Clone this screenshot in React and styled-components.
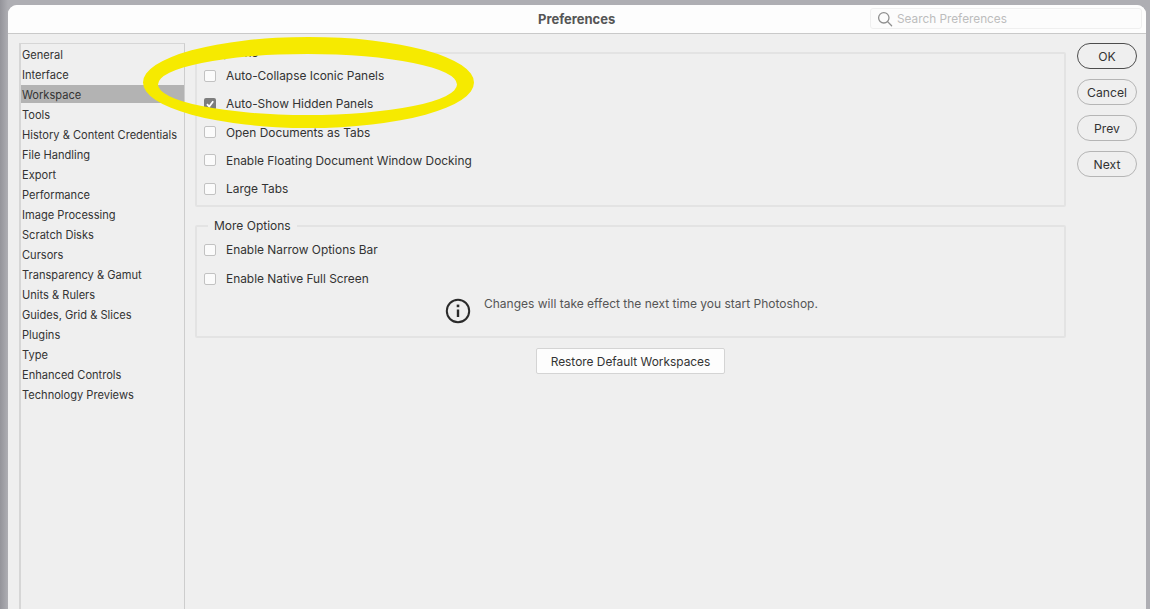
import React from "react";
import styled, { createGlobalStyle } from "styled-components";

const categories = [
  "General",
  "Interface",
  "Workspace",
  "Tools",
  "History & Content Credentials",
  "File Handling",
  "Export",
  "Performance",
  "Image Processing",
  "Scratch Disks",
  "Cursors",
  "Transparency & Gamut",
  "Units & Rulers",
  "Guides, Grid & Slices",
  "Plugins",
  "Type",
  "Enhanced Controls",
  "Technology Previews",
];

const optionRows = [
  { label: "Auto-Collapse Iconic Panels" },
  { label: "Auto-Show Hidden Panels", checked: true },
  { label: "Open Documents as Tabs" },
  { label: "Enable Floating Document Window Docking" },
  { label: "Large Tabs" },
];

const moreRows = [
  { label: "Enable Narrow Options Bar" },
  { label: "Enable Native Full Screen" },
];

const App = () => {
  return (
    <>
      <GlobalStyle />
      <StyledWindow>
        <StyledTitleBar>
          <StyledTitle>Preferences</StyledTitle>
          <StyledSearch>
            <svg width="16" height="16" viewBox="0 0 16 16" fill="none" stroke="#8f8f8f" strokeWidth="1.3">
              <circle cx="6.8" cy="6.8" r="5.2" />
              <path d="M10.6 10.6L14.6 14.8" strokeLinecap="round" />
            </svg>
            <span>Search Preferences</span>
          </StyledSearch>
        </StyledTitleBar>
        <StyledBody>
          <StyledSidebar>
            {categories.map((name) => (
              <StyledCategory key={name} $active={name === "Workspace"}>
                {name}
              </StyledCategory>
            ))}
          </StyledSidebar>
          <StyledContent>
            <StyledGroup $height="155px">
              <StyledLegend>Options</StyledLegend>
              <StyledRows $top="5px" $gap="13.25px">
                {optionRows.map((row) => (
                  <StyledRow key={row.label}>
                    <StyledCheckbox $checked={row.checked}>
                      {row.checked && (
                        <svg width="10" height="10" viewBox="0 0 10 10" fill="none" stroke="#fff" strokeWidth="1.8">
                          <path d="M2 5.2L4.2 7.6L8.2 2.2" />
                        </svg>
                      )}
                    </StyledCheckbox>
                    {row.label}
                  </StyledRow>
                ))}
              </StyledRows>
            </StyledGroup>
            <StyledGroup $height="113px">
              <StyledLegend>More Options</StyledLegend>
              <StyledRows $top="6px" $gap="14px">
                {moreRows.map((row) => (
                  <StyledRow key={row.label}>
                    <StyledCheckbox />
                    {row.label}
                  </StyledRow>
                ))}
              </StyledRows>
              <StyledNotice>
                <svg width="26" height="26" viewBox="0 0 26 26" fill="none" stroke="#2b2b2b">
                  <circle cx="13" cy="13" r="11.2" strokeWidth="2" />
                  <path d="M13 11.5V19" strokeWidth="2.4" />
                  <path d="M13 6.6V9.2" strokeWidth="2.6" />
                </svg>
                <span>Changes will take effect the next time you start Photoshop.</span>
              </StyledNotice>
            </StyledGroup>
            <StyledRestore>Restore Default Workspaces</StyledRestore>
          </StyledContent>
          <StyledActions>
            <StyledButton $primary>OK</StyledButton>
            <StyledButton>Cancel</StyledButton>
            <StyledButton>Prev</StyledButton>
            <StyledButton>Next</StyledButton>
          </StyledActions>
        </StyledBody>
      </StyledWindow>
      <StyledHighlight width="340" height="100" viewBox="0 0 340 100">
        <path
          fill="#f6ea00"
          fillRule="evenodd"
          d="M1 45.5a165.5 45.5 0 1 0 331 0a165.5 45.5 0 1 0 -331 0Z M16 47.5a149.5 30.5 0 1 0 299 0a149.5 30.5 0 1 0 -299 0Z"
        />
      </StyledHighlight>
    </>
  );
};

const GlobalStyle = createGlobalStyle`
  html, body {
    margin: 0;
    height: 609px;
    overflow: hidden;
    background: linear-gradient(90deg, #94949a 0, #aeaeb3 8px);
  }
  body {
    box-sizing: border-box;
    padding: 5px 4px 0 8px;
    font-family: Inter, "Liberation Sans", sans-serif;
    font-size: 11.9px;
    color: #333;
  }
`;

const StyledWindow = styled.div`
  height: 604px;
  display: flex;
  flex-direction: column;
  background: #efefef;
  border-radius: 9px 9px 0 0;
  overflow: hidden;
`;

const StyledTitleBar = styled.header`
  position: relative;
  height: 28px;
  flex: none;
  display: flex;
  align-items: center;
  justify-content: flex-end;
  padding-right: 4px;
  background: #fdfdfd;
  border-bottom: 1px solid #c9c9c9;
`;

const StyledTitle = styled.h1`
  position: absolute;
  left: 530px;
  margin: -1px 0 0;
  font-size: 13px;
  font-weight: 700;
  color: #555;
`;

const StyledSearch = styled.div`
  width: 272px;
  height: 21px;
  box-sizing: border-box;
  display: flex;
  align-items: center;
  gap: 4px;
  padding-left: 6px;
  margin-top: -1px;
  font-size: 11.8px;
  background: #fcfcfc;
  border: 1px solid #efefef;
  border-radius: 3px;
  color: #bdbdbd;
`;

const StyledBody = styled.div`
  flex: 1;
  min-height: 0;
  display: flex;
  padding: 9px 9px 0 11px;
`;

const StyledSidebar = styled.nav`
  width: 166px;
  flex: none;
  box-sizing: border-box;
  padding-top: 1px;
  font-size: 11.1px;
  border-left: 2px solid #d6d6d6;
  border-right: 1px solid #cdcdcd;
  border-top: 1px solid #d6d6d6;
`;

const StyledCategory = styled.div`
  height: 20px;
  line-height: 20.5px;
  padding-left: 1px;
  white-space: nowrap;
  background: ${(p) => (p.$active ? "linear-gradient(#b3b3b3 0, #b3b3b3 18px, #efefef 18px)" : "none")};
`;

const StyledContent = styled.main`
  width: 871px;
  flex: none;
  margin-left: 10px;
  padding-top: 9px;
  display: flex;
  flex-direction: column;
  gap: 18px;
`;

const StyledGroup = styled.section`
  position: relative;
  height: ${(p) => p.$height};
  box-sizing: border-box;
  padding: 9px 7px 0;
  border: 2px solid #e3e3e3;
  border-radius: 2px;
`;

const StyledLegend = styled.span`
  position: absolute;
  top: -9px;
  left: 11px;
  padding: 0 6px;
  font-size: 12px;
  line-height: 16px;
  background: #efefef;
`;

const StyledRows = styled.div`
  display: flex;
  flex-direction: column;
  gap: ${(p) => p.$gap};
  padding-top: ${(p) => p.$top};
`;

const StyledRow = styled.label`
  display: flex;
  align-items: center;
  gap: 10px;
  height: 15px;
  white-space: nowrap;
`;

const StyledCheckbox = styled.span`
  width: 12px;
  height: 12px;
  flex: none;
  box-sizing: border-box;
  display: flex;
  align-items: center;
  justify-content: center;
  background: ${(p) => (p.$checked ? "#7d7d7d" : "#fbfbfb")};
  border: ${(p) => (p.$checked ? "none" : "1px solid #c2c2c2")};
  border-radius: 2px;
`;

const StyledNotice = styled.div`
  display: flex;
  align-items: flex-start;
  gap: 13px;
  margin: 10px 0 0 241px;
  font-size: 12px;
  color: #555;
  white-space: nowrap;
  line-height: 15px;

  svg {
    flex: none;
    margin-top: 2px;
  }
`;

const StyledRestore = styled.button`
  align-self: flex-start;
  width: 189px;
  height: 26px;
  margin: -8px 0 0 341px;
  padding: 0;
  font: inherit;
  color: #333;
  background: #fdfdfd;
  border: 1px solid #d4d4d4;
  border-radius: 2px;
`;

const StyledActions = styled.aside`
  display: flex;
  flex-direction: column;
  gap: 10px;
  margin-left: 11px;
`;

const StyledButton = styled.button`
  width: 60px;
  height: 26px;
  padding: 0;
  font: inherit;
  font-size: 12.2px;
  color: #333;
  background: #efefef;
  border: 1px solid ${(p) => (p.$primary ? "#4d4d4d" : "#b5b5b5")};
  border-radius: 13px;
`;

const StyledHighlight = styled.svg`
  position: absolute;
  left: 142px;
  top: 37px;
`;

export default App;
